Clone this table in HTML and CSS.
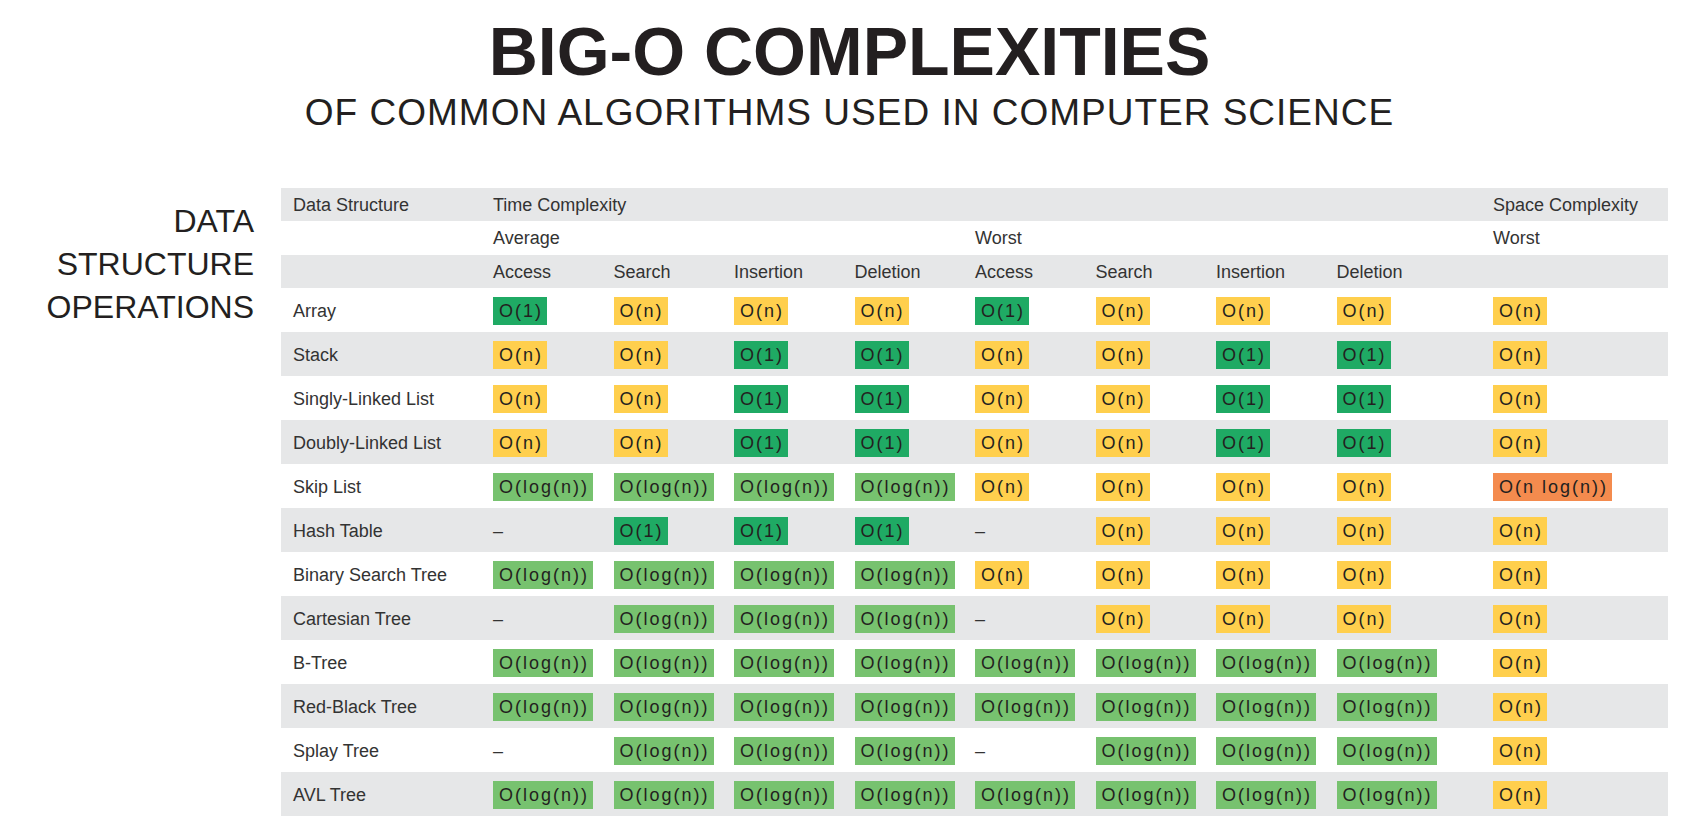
FILE: index.html
```html
<!DOCTYPE html>
<html lang="en">
<head>
<meta charset="utf-8">
<title>Big-O Complexities</title>
<link rel="stylesheet" href="styles.css">
</head>
<body>
<header class="head">
  <h1 class="title">BIG-O COMPLEXITIES</h1>
  <p class="subtitle">OF COMMON ALGORITHMS USED IN COMPUTER SCIENCE</p>
</header>
<main class="section">
  <h2 class="label">DATA<br>STRUCTURE<br>OPERATIONS</h2>
  <div class="table">
    <div class="row hrow gray">
      <div class="c">Data Structure</div>
      <div class="c span-time">Time Complexity</div>
      <div class="c">Space Complexity</div>
    </div>
    <div class="row hrow mid">
      <div class="c"></div>
      <div class="c span-avg">Average</div>
      <div class="c span-worst">Worst</div>
      <div class="c">Worst</div>
    </div>
    <div class="row hrow gray">
      <div class="c"></div>
      <div class="c">Access</div><div class="c">Search</div><div class="c">Insertion</div><div class="c">Deletion</div>
      <div class="c">Access</div><div class="c">Search</div><div class="c">Insertion</div><div class="c">Deletion</div>
      <div class="c"></div>
    </div>

    <div class="row drow">
      <div class="c">Array</div>
      <div class="c"><span class="b g1">O(1)</span></div><div class="c"><span class="b y">O(n)</span></div><div class="c"><span class="b y">O(n)</span></div><div class="c"><span class="b y">O(n)</span></div>
      <div class="c"><span class="b g1">O(1)</span></div><div class="c"><span class="b y">O(n)</span></div><div class="c"><span class="b y">O(n)</span></div><div class="c"><span class="b y">O(n)</span></div>
      <div class="c"><span class="b y">O(n)</span></div>
    </div>
    <div class="row drow gray">
      <div class="c">Stack</div>
      <div class="c"><span class="b y">O(n)</span></div><div class="c"><span class="b y">O(n)</span></div><div class="c"><span class="b g1">O(1)</span></div><div class="c"><span class="b g1">O(1)</span></div>
      <div class="c"><span class="b y">O(n)</span></div><div class="c"><span class="b y">O(n)</span></div><div class="c"><span class="b g1">O(1)</span></div><div class="c"><span class="b g1">O(1)</span></div>
      <div class="c"><span class="b y">O(n)</span></div>
    </div>
    <div class="row drow">
      <div class="c">Singly-Linked List</div>
      <div class="c"><span class="b y">O(n)</span></div><div class="c"><span class="b y">O(n)</span></div><div class="c"><span class="b g1">O(1)</span></div><div class="c"><span class="b g1">O(1)</span></div>
      <div class="c"><span class="b y">O(n)</span></div><div class="c"><span class="b y">O(n)</span></div><div class="c"><span class="b g1">O(1)</span></div><div class="c"><span class="b g1">O(1)</span></div>
      <div class="c"><span class="b y">O(n)</span></div>
    </div>
    <div class="row drow gray">
      <div class="c">Doubly-Linked List</div>
      <div class="c"><span class="b y">O(n)</span></div><div class="c"><span class="b y">O(n)</span></div><div class="c"><span class="b g1">O(1)</span></div><div class="c"><span class="b g1">O(1)</span></div>
      <div class="c"><span class="b y">O(n)</span></div><div class="c"><span class="b y">O(n)</span></div><div class="c"><span class="b g1">O(1)</span></div><div class="c"><span class="b g1">O(1)</span></div>
      <div class="c"><span class="b y">O(n)</span></div>
    </div>
    <div class="row drow">
      <div class="c">Skip List</div>
      <div class="c"><span class="b g2">O(log(n))</span></div><div class="c"><span class="b g2">O(log(n))</span></div><div class="c"><span class="b g2">O(log(n))</span></div><div class="c"><span class="b g2">O(log(n))</span></div>
      <div class="c"><span class="b y">O(n)</span></div><div class="c"><span class="b y">O(n)</span></div><div class="c"><span class="b y">O(n)</span></div><div class="c"><span class="b y">O(n)</span></div>
      <div class="c"><span class="b o">O(n log(n))</span></div>
    </div>
    <div class="row drow gray">
      <div class="c">Hash Table</div>
      <div class="c">–</div><div class="c"><span class="b g1">O(1)</span></div><div class="c"><span class="b g1">O(1)</span></div><div class="c"><span class="b g1">O(1)</span></div>
      <div class="c">–</div><div class="c"><span class="b y">O(n)</span></div><div class="c"><span class="b y">O(n)</span></div><div class="c"><span class="b y">O(n)</span></div>
      <div class="c"><span class="b y">O(n)</span></div>
    </div>
    <div class="row drow">
      <div class="c">Binary Search Tree</div>
      <div class="c"><span class="b g2">O(log(n))</span></div><div class="c"><span class="b g2">O(log(n))</span></div><div class="c"><span class="b g2">O(log(n))</span></div><div class="c"><span class="b g2">O(log(n))</span></div>
      <div class="c"><span class="b y">O(n)</span></div><div class="c"><span class="b y">O(n)</span></div><div class="c"><span class="b y">O(n)</span></div><div class="c"><span class="b y">O(n)</span></div>
      <div class="c"><span class="b y">O(n)</span></div>
    </div>
    <div class="row drow gray">
      <div class="c">Cartesian Tree</div>
      <div class="c">–</div><div class="c"><span class="b g2">O(log(n))</span></div><div class="c"><span class="b g2">O(log(n))</span></div><div class="c"><span class="b g2">O(log(n))</span></div>
      <div class="c">–</div><div class="c"><span class="b y">O(n)</span></div><div class="c"><span class="b y">O(n)</span></div><div class="c"><span class="b y">O(n)</span></div>
      <div class="c"><span class="b y">O(n)</span></div>
    </div>
    <div class="row drow">
      <div class="c">B-Tree</div>
      <div class="c"><span class="b g2">O(log(n))</span></div><div class="c"><span class="b g2">O(log(n))</span></div><div class="c"><span class="b g2">O(log(n))</span></div><div class="c"><span class="b g2">O(log(n))</span></div>
      <div class="c"><span class="b g2">O(log(n))</span></div><div class="c"><span class="b g2">O(log(n))</span></div><div class="c"><span class="b g2">O(log(n))</span></div><div class="c"><span class="b g2">O(log(n))</span></div>
      <div class="c"><span class="b y">O(n)</span></div>
    </div>
    <div class="row drow gray">
      <div class="c">Red-Black Tree</div>
      <div class="c"><span class="b g2">O(log(n))</span></div><div class="c"><span class="b g2">O(log(n))</span></div><div class="c"><span class="b g2">O(log(n))</span></div><div class="c"><span class="b g2">O(log(n))</span></div>
      <div class="c"><span class="b g2">O(log(n))</span></div><div class="c"><span class="b g2">O(log(n))</span></div><div class="c"><span class="b g2">O(log(n))</span></div><div class="c"><span class="b g2">O(log(n))</span></div>
      <div class="c"><span class="b y">O(n)</span></div>
    </div>
    <div class="row drow">
      <div class="c">Splay Tree</div>
      <div class="c">–</div><div class="c"><span class="b g2">O(log(n))</span></div><div class="c"><span class="b g2">O(log(n))</span></div><div class="c"><span class="b g2">O(log(n))</span></div>
      <div class="c">–</div><div class="c"><span class="b g2">O(log(n))</span></div><div class="c"><span class="b g2">O(log(n))</span></div><div class="c"><span class="b g2">O(log(n))</span></div>
      <div class="c"><span class="b y">O(n)</span></div>
    </div>
    <div class="row drow gray">
      <div class="c">AVL Tree</div>
      <div class="c"><span class="b g2">O(log(n))</span></div><div class="c"><span class="b g2">O(log(n))</span></div><div class="c"><span class="b g2">O(log(n))</span></div><div class="c"><span class="b g2">O(log(n))</span></div>
      <div class="c"><span class="b g2">O(log(n))</span></div><div class="c"><span class="b g2">O(log(n))</span></div><div class="c"><span class="b g2">O(log(n))</span></div><div class="c"><span class="b g2">O(log(n))</span></div>
      <div class="c"><span class="b y">O(n)</span></div>
    </div>
  </div>
</main>
</body>
</html>
```

FILE: styles.css
```css
html, body {
  margin: 0;
  padding: 0;
  background: #ffffff;
}

body {
  font-family: "Liberation Sans", Arial, Helvetica, sans-serif;
  color: #231f20;
  overflow: hidden;
}

.head {
  padding: 17px 0 0 16px;
  text-align: center;
}

.title {
  margin: 0;
  font-size: 68px;
  line-height: 68px;
  font-weight: 700;
  letter-spacing: 0;
  color: #231f20;
}

.subtitle {
  margin: 9px 0 0 0;
  font-size: 37px;
  line-height: 37px;
  font-weight: 400;
  letter-spacing: 1px;
  color: #231f20;
}

.section {
  display: flex;
  align-items: flex-start;
  gap: 27px;
  margin-top: 57px;
}

.label {
  width: 254px;
  flex: none;
  margin: 12px 0 0 0;
  text-align: right;
  font-size: 32px;
  line-height: 43px;
  font-weight: 400;
  color: #231f20;
}

.table {
  width: 1387px;
  flex: none;
  font-size: 18px;
  color: #333333;
}

.row {
  display: grid;
  grid-template-columns: 200px repeat(7, 120.5px) 156.5px 1fr;
  align-items: center;
}

.gray {
  background: #e6e7e8;
}

.hrow {
  height: 33px;
  padding-top: 1px;
  box-sizing: border-box;
}

.hrow.mid {
  height: 34px;
}

.drow {
  height: 44px;
  padding-top: 2px;
  box-sizing: border-box;
}

.c {
  padding-left: 12px;
  white-space: nowrap;
  line-height: 21px;
}

.span-time {
  grid-column: 2 / 10;
}

.span-avg {
  grid-column: 2 / 6;
}

.span-worst {
  grid-column: 6 / 10;
}

.b {
  display: inline-block;
  height: 28px;
  line-height: 28px;
  padding: 0 4px 0 6px;
  letter-spacing: 2px;
  font-size: 18px;
  color: #231f20;
  vertical-align: middle;
}

.g1 {
  background: #1faa64;
}

.g2 {
  background: #77c26f;
}

.y {
  background: #ffcf4d;
}

.o {
  background: #f48b4e;
}
```
